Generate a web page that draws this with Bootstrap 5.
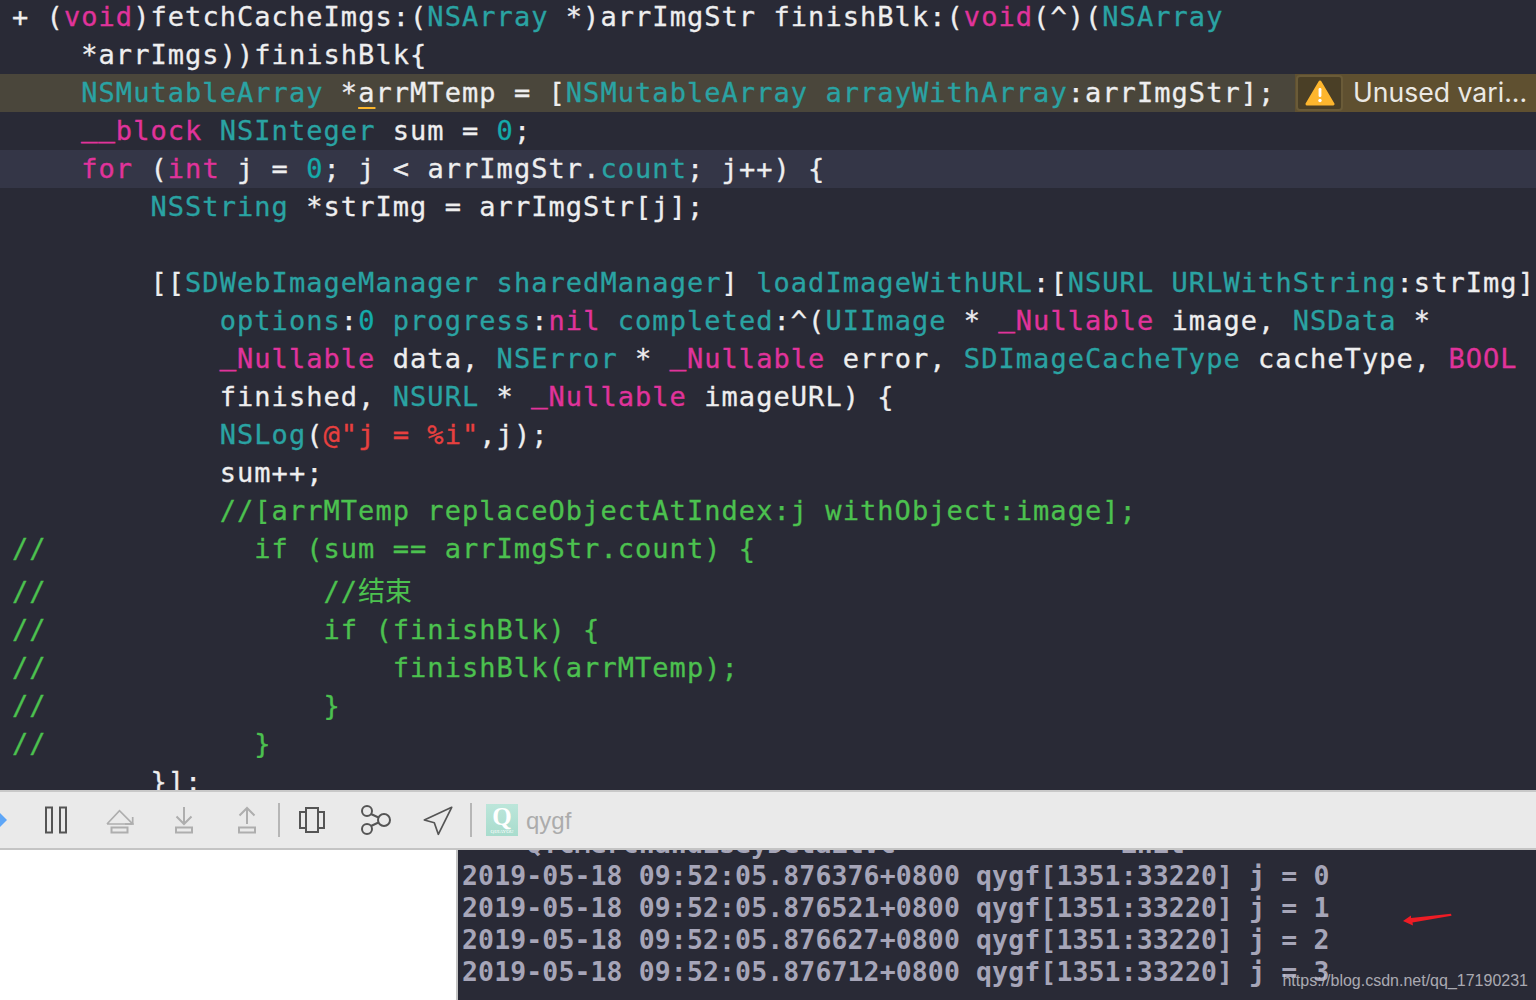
<!DOCTYPE html>
<html lang="en">
<head>
<meta charset="utf-8">
<title>Xcode debug view</title>
<link href="https://cdn.jsdelivr.net/npm/bootstrap@5.3.0/dist/css/bootstrap.min.css" rel="stylesheet">
<style>
html,body{height:1000px;overflow:hidden;background:#292a36}
.shell{height:1000px;width:1536px}
.code-pane{height:790px;overflow:hidden;background:#292a36;padding-top:0;font-family:"DejaVu Sans Mono","Noto Sans CJK SC",monospace;font-size:27px;letter-spacing:1.05px;color:#eeeeef;-webkit-text-stroke:.3px currentColor}
.code-inner{margin-top:-2px}
.ln{height:38px;line-height:38px;white-space:pre;padding-left:12px;overflow:hidden}
.ln-warn{background:#4a463b;padding-right:0}
.ln-cur{background:#343647}
.ln-cjk{height:43px;line-height:43px}
.tk{color:#e0339b}.tt{color:#2aa3a3}.tn{color:#14abab}.ts{color:#e8403f}.tc{color:#4cc14f}
.us{vertical-align:3px;line-height:0;-webkit-text-stroke:.8px currentColor}
.cn{font-family:"Noto Sans CJK SC",sans-serif;letter-spacing:0;-webkit-text-stroke:0}
.und{text-decoration:underline;text-decoration-color:#fbb52b;text-decoration-thickness:2px;text-underline-offset:5px}
.warn-tag{width:241px;height:38px;background:#5f5030;margin-left:auto;letter-spacing:0;font-family:"Inter","Liberation Sans",sans-serif;font-size:26.6px;line-height:36px;color:#ebe9e4;-webkit-text-stroke:0}
.warn-box{width:47px;height:36px;margin:1px 10px 1px 1px;background:#4a3f26;border:2px solid #6a5b38;border-radius:4px}
.warn-txt{margin-top:-2px}
.tool-bar{height:60px;background:#eaeaea;border-top:2px solid #c8c8c8;border-bottom:2px solid #c4c4c4;padding-left:24px;position:relative}
.cell{width:64px;height:56px}
.cell-sm{width:62px}
.sepr{width:2px;height:34px;background:#b6b6b6}
.logo{width:32px;height:32px;margin-left:14px;background:linear-gradient(#bce6da,#a8dccd);color:#fff;line-height:1}
.logo-q{font-family:"Liberation Serif",serif;font-weight:700;font-size:25px;line-height:22px}
.logo-t{font-family:"Liberation Serif",serif;font-size:5px;line-height:7px}
.tgt{font-family:"Liberation Sans",sans-serif;font-size:24px;color:#acacac;margin-left:8px;margin-top:2px}
.low{height:150px}
.vars{width:456px;background:#fff}
.console{flex:1;border-left:2px solid #c4c4c4;background:#292a36;overflow:hidden;position:relative;padding-left:4px;font-family:"DejaVu Sans Mono",monospace;font-weight:700;font-size:26.5px;letter-spacing:.11px;color:#a6a5b8}
.con-inner{margin-top:-22px}
.cl{height:32px;line-height:32px;white-space:pre}
.arrow{position:absolute;left:943px;top:60px}
.mark-url{position:absolute;right:8px;bottom:9px;font-family:"Liberation Sans",sans-serif;font-weight:400;font-size:16px;letter-spacing:0;line-height:20px;color:#c9c9d0;opacity:.8}
</style>
</head>
<body>
<div class="shell d-flex flex-column">
  <div class="code-pane">
    <div class="code-inner">
<div class="ln">+ (<span class="tk">void</span>)fetchCacheImgs:(<span class="tt">NSArray</span> *)arrImgStr finishBlk:(<span class="tk">void</span>(^)(<span class="tt">NSArray</span></div>
<div class="ln">    *arrImgs))finishBlk{</div>
<div class="ln ln-warn d-flex"><span>    <span class="tt">NSMutableArray</span> *<span class="und">a</span>rrMTemp = [<span class="tt">NSMutableArray</span> <span class="tt">arrayWithArray</span>:arrImgStr];</span><span class="warn-tag d-flex align-items-center"><span class="warn-box d-flex align-items-center justify-content-center"><svg width="30" height="26" viewBox="0 0 30 26"><path d="M15 2 L28 24 H2 Z" fill="#fdb62e" stroke="#fdb62e" stroke-width="3" stroke-linejoin="round"/><rect x="13.6" y="8" width="2.8" height="9" rx="1.2" fill="#fff"/><circle cx="15" cy="20.5" r="1.7" fill="#fff"/></svg></span><span class="warn-txt">Unused vari...</span></span></div>
<div class="ln">    <span class="tk"><span class="us">__</span>block</span> <span class="tt">NSInteger</span> sum = <span class="tn">0</span>;</div>
<div class="ln ln-cur">    <span class="tk">for</span> (<span class="tk">int</span> j = <span class="tn">0</span>; j &lt; arrImgStr.<span class="tt">count</span>; j++) {</div>
<div class="ln">        <span class="tt">NSString</span> *strImg = arrImgStr[j];</div>
<div class="ln"> </div>
<div class="ln">        [[<span class="tt">SDWebImageManager</span> <span class="tt">sharedManager</span>] <span class="tt">loadImageWithURL</span>:[<span class="tt">NSURL</span> <span class="tt">URLWithString</span>:strImg]</div>
<div class="ln">            <span class="tt">options</span>:<span class="tn">0</span> <span class="tt">progress</span>:<span class="tk">nil</span> <span class="tt">completed</span>:^(<span class="tt">UIImage</span> * <span class="tk"><span class="us">_</span>Nullable</span> image, <span class="tt">NSData</span> *</div>
<div class="ln">            <span class="tk"><span class="us">_</span>Nullable</span> data, <span class="tt">NSError</span> * <span class="tk"><span class="us">_</span>Nullable</span> error, <span class="tt">SDImageCacheType</span> cacheType, <span class="tk">BOOL</span></div>
<div class="ln">            finished, <span class="tt">NSURL</span> * <span class="tk"><span class="us">_</span>Nullable</span> imageURL) {</div>
<div class="ln">            <span class="tt">NSLog</span>(<span class="ts">@"j = %i"</span>,j);</div>
<div class="ln">            sum++;</div>
<div class="ln tc">            //[arrMTemp replaceObjectAtIndex:j withObject:image];</div>
<div class="ln tc">//            if (sum == arrImgStr.count) {</div>
<div class="ln ln-cjk tc">//                //<span class="cn">结束</span></div>
<div class="ln tc">//                if (finishBlk) {</div>
<div class="ln tc">//                    finishBlk(arrMTemp);</div>
<div class="ln tc">//                }</div>
<div class="ln tc">//            }</div>
<div class="ln">        }];</div>
    </div>
  </div>
  <div class="tool-bar d-flex align-items-center">
    <svg class="position-absolute top-50 start-0 translate-middle-y" width="8" height="16" viewBox="0 0 8 16"><path d="M0 1 L7 8 L0 15 Z" fill="#5ea6f7"/></svg>
    <span class="cell d-flex align-items-center justify-content-center"><svg width="24" height="28" viewBox="0 0 24 28" fill="none" stroke="#555" stroke-width="2"><rect x="2" y="1.5" width="6" height="25"/><rect x="16" y="1.5" width="6" height="25"/></svg></span>
    <span class="cell d-flex align-items-center justify-content-center"><svg width="28" height="28" viewBox="0 0 28 28" fill="none" stroke="#aeaeae" stroke-width="1.7"><path d="M1 18 L13.5 4.7 L26.7 18 H1"/><path d="M26.7 18 V11"/><path d="M26.7 18 H19"/><rect x="5.5" y="21.5" width="16" height="5" stroke-width="2"/></svg></span>
    <span class="cell d-flex align-items-center justify-content-center"><svg width="20" height="28" viewBox="0 0 20 28" fill="none" stroke="#aeaeae" stroke-width="2"><path d="M10 1 V18"/><path d="M2.5 10.5 L10 18 L17.5 10.5"/><rect x="2" y="21.5" width="16" height="5"/></svg></span>
    <span class="cell cell-sm d-flex align-items-center justify-content-center"><svg width="20" height="28" viewBox="0 0 20 28" fill="none" stroke="#aeaeae" stroke-width="2"><path d="M10 2 V18"/><path d="M2.5 9.5 L10 2 L17.5 9.5"/><rect x="2" y="21.5" width="16" height="5"/></svg></span>
    <span class="sepr"></span>
    <span class="cell d-flex align-items-center justify-content-center"><svg width="28" height="28" viewBox="0 0 28 28" fill="none" stroke="#555" stroke-width="2"><rect x="2" y="6" width="24" height="16"/><rect x="8" y="2" width="12" height="24" fill="#eaeaea"/></svg></span>
    <span class="cell d-flex align-items-center justify-content-center"><svg width="32" height="32" viewBox="0 0 32 32" fill="none" stroke="#555" stroke-width="2"><circle cx="7" cy="7" r="5"/><circle cx="7" cy="25" r="5"/><circle cx="24" cy="16" r="6"/><path d="M11 10 L18.5 13.5"/><path d="M11 22 L18.5 18.5"/></svg></span>
    <span class="cell cell-sm d-flex align-items-center justify-content-center"><svg width="32" height="32" viewBox="0 0 32 32" fill="none" stroke="#555" stroke-width="1.7" stroke-linejoin="round"><path d="M28.7 3.3 L1.3 16 L11.3 18.7 L15.3 30.3 Z"/></svg></span>
    <span class="sepr"></span>
    <span class="logo d-flex flex-column align-items-center justify-content-center"><span class="logo-q">Q</span><span class="logo-t">QIJIAYOU</span></span>
    <span class="tgt">qygf</span>
  </div>
  <div class="low d-flex">
    <div class="vars"></div>
    <div class="console">
      <div class="con-inner">
<div class="cl">    QYCMerchandiseyDetailVC              init</div>
<div class="cl">2019-05-18 09:52:05.876376+0800 qygf[1351:33220] j = 0</div>
<div class="cl">2019-05-18 09:52:05.876521+0800 qygf[1351:33220] j = 1</div>
<div class="cl">2019-05-18 09:52:05.876627+0800 qygf[1351:33220] j = 2</div>
<div class="cl">2019-05-18 09:52:05.876712+0800 qygf[1351:33220] j = 3</div>
      </div>
      <svg class="arrow" width="52" height="16" viewBox="0 0 52 16"><path d="M2 11 L10 5.5 L10 8 L50 3.8 L50.5 5.8 L11.5 12.5 L12 15.5 Z" fill="#ee1c25"/></svg>
      <div class="mark-url">https://blog.csdn.net/qq_17190231</div>
    </div>
  </div>
</div>
<script src="https://cdn.jsdelivr.net/npm/bootstrap@5.3.0/dist/js/bootstrap.bundle.min.js"></script>
</body>
</html>
